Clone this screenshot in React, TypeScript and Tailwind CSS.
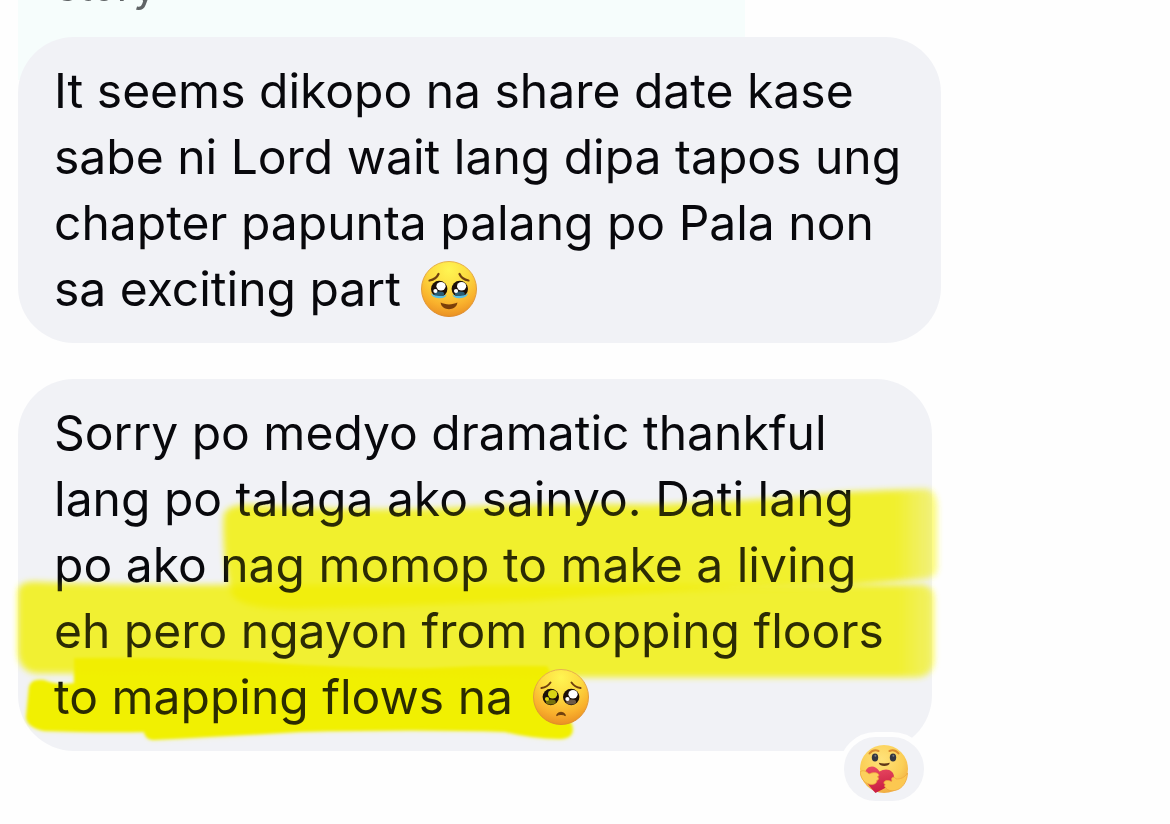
import type { ReactNode } from "react";

function FaceGradient({ id }: { id: string }) {
  return (
    <>
      <radialGradient id={id} cx="0.5" cy="0.15" r="0.88">
        <stop offset="0" stopColor="#fff552" />
        <stop offset="0.4" stopColor="#fddc40" />
        <stop offset="0.75" stopColor="#f9b02c" />
        <stop offset="1" stopColor="#e88c22" />
      </radialGradient>
      <linearGradient id={`${id}-rim`} x1="0" y1="0" x2="0" y2="1">
        <stop offset="0" stopColor="#e6b04e" />
        <stop offset="1" stopColor="#dd8a2c" />
      </linearGradient>
    </>
  );
}

function Eye({ cx, shine, glow }: { cx: number; shine: string; glow: string }) {
  return (
    <g>
      <circle cx={cx} cy="28" r="8.2" fill="#1c0f08" />
      <ellipse cx={cx} cy="33" rx="5" ry="2.4" fill={glow} />
      <ellipse cx={cx + 1.8} cy="25.2" rx="4.6" ry="4.2" fill={shine} />
      <circle cx={cx - 3.8} cy="30" r="2.1" fill={shine} />
    </g>
  );
}

function TearyEmoji() {
  return (
    <svg role="img" aria-label="Face holding back tears" viewBox="0 0 56 56" className="h-14 w-14">
      <defs>
        <FaceGradient id="teary" />
      </defs>
      <circle cx="28" cy="28" r="27.5" fill="url(#teary)" stroke="url(#teary-rim)" />
      <path d="M8.5 19.5c4.5-.8 7.5-3 9-6.5M47.5 19.5c-4.5-.8-7.5-3-9-6.5" fill="none" stroke="#70400f" strokeWidth="2.2" strokeLinecap="round" />
      <Eye cx={18.2} shine="#ffffff" glow="#2a5c74" />
      <Eye cx={38.8} shine="#ffffff" glow="#2a5c74" />
      <path d="M10 32c2 3.2 12 4.2 15.5 1.5c-.5 2.8-3.5 4-7.5 3.7c-4.5-.3-7.5-1.800-8-5.200z" fill="#58bfe6" />
      <path d="M47 32c-2 3.2-12 4.2-15.5 1.5c.5 2.8 3.5 4 7.5 3.7c4.5-.3 7.5-1.800 8-5.200z" fill="#58bfe6" />
      <path d="M19.6 41.6c4.5 2.4 12.3 2.4 16.8 0c-.9 8.8-15.900 8.800-16.800 0z" fill="#7a3f0a" />
    </svg>
  );
}

function PleadingEmoji() {
  return (
    <svg role="img" aria-label="Pleading face" viewBox="0 0 56 56" className="h-14 w-14">
      <defs>
        <FaceGradient id="pleading" />
      </defs>
      <circle cx="28" cy="28" r="27.5" fill="url(#pleading)" stroke="url(#pleading-rim)" />
      <path d="M8.5 19c4-.6 7-2.6 9-5.5M47.5 19c-4-.6-7-2.6-9-5.5" fill="none" stroke="#70400f" strokeWidth="2" strokeLinecap="round" />
      <Eye cx={17.8} shine="#d8d414" glow="#77720a" />
      <Eye cx={38.2} shine="#ffffff" glow="#6e5946" />
      <path d="M23.6 46.6c.8-4.4 8-4.4 8.8 0c-2.5-1.500-6.300-1.500-8.800 0z" fill="#70400f" stroke="#70400f" strokeLinejoin="round" />
    </svg>
  );
}

function CareEmoji() {
  return (
    <svg aria-hidden="true" viewBox="0 0 48 48" className="h-12 w-12">
      <defs>
        <radialGradient id="care" cx="0.45" cy="0.3" r="0.75">
          <stop offset="0" stopColor="#ffe27a" />
          <stop offset="0.6" stopColor="#fbcf56" />
          <stop offset="1" stopColor="#efa63f" />
        </radialGradient>
        <linearGradient id="care-heart" x1="0.2" y1="0" x2="0.4" y2="1">
          <stop offset="0" stopColor="#ea4c64" />
          <stop offset="1" stopColor="#c91c40" />
        </linearGradient>
      </defs>
      <circle cx="24" cy="24" r="24" fill="url(#care)" />
      <path d="M9.5 8.4c2.5-2.9 6-3.700 9-2.400M29.500 6c3-1.300 6.500-.5 9 2.400" fill="none" stroke="#d98b30" strokeWidth="2" strokeLinecap="round" />
      <ellipse cx="15" cy="12.5" rx="3.2" ry="4" fill="#343640" />
      <ellipse cx="33" cy="12.5" rx="3.2" ry="4" fill="#343640" />
      <circle cx="15.4" cy="10.7" r="1" fill="#777984" />
      <circle cx="33.4" cy="10.7" r="1" fill="#777984" />
      <path d="M18.8 17.8c3 1 7.6 1 11 0c-.6 4.3-10.4 4.3-11 0z" fill="#603718" />
      <path d="M15.5 48C10 42 4.500 36 5 29c.5-8 9.500-10.500 14.500-2.500c6.500-4.500 15-1.500 14.500 6c-.5 7.500-10 11-18.500 15.500z" fill="url(#care-heart)" />
      <path d="M0 27c3-2.500 6-1 9 2c3-1.500 7-2 9-.3c1.500 1.300.7 2.800-.8 3c2.300 1.300 1.400 3.300-.5 3.700c.3 2.800-2.500 4-5.200 4C6 39.400 1 35 0 27z" fill="#fcd05c" stroke="#eda83f" strokeWidth="0.8" />
      <path d="M47.500 28c-3 5-7 6-11.500 6c-1-2.300-4-2.500-4.300-.3c-.3 2 .8 2.300-.2 2.800c-3-1.500-6-1.200-7.200.2c-1 1.300.2 2.600 1 2.800c-1.300 1.200-.5 2.800.5 3.100c1.500 3.500 8 4.200 13.200 1.400c5-2.800 8.300-9 8.500-16z" fill="#fcc851" stroke="#eda83f" strokeWidth="0.8" />
    </svg>
  );
}

const UPPER =
  "M224 514Q228 503 250 504Q340 510 430 508Q540 502 650 504Q760 500 850 491L926 488Q938 490 937 510V568Q936 577 922 578L850 584Q660 589 530 600Q400 605 300 608Q240 608 232 594Q222 560 224 514Z";
const MIDDLE =
  "M18 592Q18 581 34 581Q120 585 230 584H922Q934 585 934 598V660Q932 676 916 676H540L75 672H36Q20 670 18 652Z";
const LOWER =
  "M29 686Q31 677 44 679Q58 685 74 682V657Q180 656 260 661Q350 668 430 667Q490 664 547 665L560 690L572 724Q576 738 558 738Q535 738 505 731Q420 728 300 731Q220 736 153 739Q145 738 144 731Q100 732 44 730Q26 726 26 716Z";

function Highlighter() {
  return (
    <>
      <svg aria-hidden="true" viewBox="0 378 960 372" className="pointer-events-none absolute top-0 -left-[18px] h-[372px] w-[960px] overflow-visible mix-blend-multiply">
        <defs>
          <filter id="soft" x="-5%" y="-10%" width="110%" height="120%">
            <feGaussianBlur stdDeviation="3" />
          </filter>
          <filter id="crisp" x="-5%" y="-10%" width="110%" height="120%">
            <feGaussianBlur stdDeviation="1.5" />
          </filter>
          <linearGradient id="fade" gradientUnits="userSpaceOnUse" x1="224" y1="0" x2="938" y2="0">
            <stop offset="0.94" stopColor="#fffd34" />
            <stop offset="1" stopColor="#fffd34" stopOpacity="0.45" />
          </linearGradient>
          <linearGradient id="fade-middle" gradientUnits="userSpaceOnUse" x1="18" y1="0" x2="935" y2="0">
            <stop offset="0.96" stopColor="#fffd3a" />
            <stop offset="1" stopColor="#fffd3a" stopOpacity="0.65" />
          </linearGradient>
        </defs>
        <path d={UPPER} fill="url(#fade)" filter="url(#soft)" className="mix-blend-multiply" />
        <path d={MIDDLE} fill="url(#fade-middle)" filter="url(#soft)" className="mix-blend-multiply" />
        <path d={LOWER} fill="#fffd00" filter="url(#crisp)" className="mix-blend-multiply" />
      </svg>
      <svg aria-hidden="true" viewBox="0 378 960 372" className="pointer-events-none absolute top-0 -left-[18px] h-[372px] w-[960px] overflow-visible opacity-15">
        <g fill="#f2f010" filter="url(#soft)">
          <path d={UPPER} />
          <path d={MIDDLE} />
          <path d={LOWER} />
        </g>
      </svg>
    </>
  );
}

function Bubble({ lines, emoji, children, className }: { lines: string[]; emoji: ReactNode; children?: ReactNode; className: string }) {
  return (
    <article className={`relative w-fit rounded-[56px] bg-[#f1f2f6] pt-[21px] pb-[21px] pl-9 ${className}`}>
      <p className="text-[48px] leading-[66px] whitespace-nowrap text-[#08080c]">
        {lines.map((line, i) => (
          <span key={line} className={i === lines.length - 1 ? "flex items-center gap-5" : "block"}>
            {line}
            {i === lines.length - 1 && <span className="relative z-10">{emoji}</span>}
          </span>
        ))}
      </p>
      {children}
    </article>
  );
}

export default function App() {
  return (
    <main className="min-h-screen overflow-hidden bg-[#fefefe] px-[18px] font-['Inter','Liberation_Sans',sans-serif]">
      <div className="flow-root h-20 w-[727px] max-w-full bg-[#f6fdfc] pl-[38px]">
        <p className="-mt-[38px] text-[42px] leading-[48px] text-[#606466]">story</p>
      </div>
      <div className="-mt-[43px] flex flex-col gap-9">
        <Bubble
          className="pr-10"
          lines={["It seems dikopo na share date kase", "sabe ni Lord wait lang dipa tapos ung", "chapter papunta palang po Pala non", "sa exciting part"]}
          emoji={<TearyEmoji />}
        />
        <Bubble
          className="pr-12"
          lines={["Sorry po medyo dramatic thankful", "lang po talaga ako sainyo. Dati lang", "po ako nag momop to make a living", "eh pero ngayon from mopping floors", "to mapping flows na"]}
          emoji={<PleadingEmoji />}
        >
          <Highlighter />
          <button type="button" aria-label="Care reaction" className="absolute right-[3px] -bottom-[55px] z-20 flex h-[74px] w-[90px] items-center justify-center rounded-full border-[5px] border-[#fefefe] bg-[#f1f2f6]">
            <CareEmoji />
          </button>
        </Bubble>
      </div>
    </main>
  );
}
